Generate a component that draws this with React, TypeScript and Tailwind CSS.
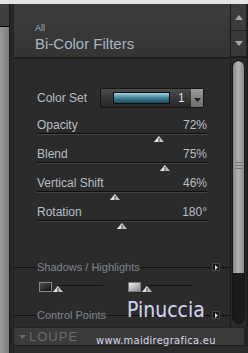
import type { CSSProperties } from 'react';

const sliders = [
  { label: 'Opacity', value: '72%', pos: 72 },
  { label: 'Blend', value: '75%', pos: 75 },
  { label: 'Vertical Shift', value: '46%', pos: 46 },
  { label: 'Rotation', value: '180°', pos: 50 },
];

function Thumb({ className = '', style }: { className?: string; style?: CSSProperties }) {
  return (
    <svg width="10" height="6" viewBox="0 0 10 6" className={className} style={style}>
      <polygon points="5,0 10,6 0,6" fill="#bdbdbd" />
      <polygon points="5,0 5,6 0,6" fill="#dedede" />
      <line x1="5" y1="2" x2="5" y2="6" stroke="#4a4a4a" strokeWidth="1" />
    </svg>
  );
}

function SectionHead({ title }: { title: string }) {
  return (
    <div className="flex items-center h-[12px]">
      <div className="w-[22px] h-px bg-[#111]" />
      <span className="text-[11px] leading-[12px] text-[#7f858b] px-px">{title}</span>
      <div className="flex-1 h-px bg-[#111]" />
      <div className="w-[8px] h-[8px] bg-[#161616] border border-[#484848] flex items-center justify-center">
        <svg width="3" height="5" viewBox="0 0 3 5">
          <polygon points="0,0 3,2.5 0,5" fill="#ddd" />
        </svg>
      </div>
      <div className="w-[10px] h-px bg-[#111]" />
    </div>
  );
}

function Swatch({ light }: { light?: boolean }) {
  return (
    <div className="flex items-start">
      <div
        className={
          light
            ? 'w-[13px] h-[10px] border border-[#777] bg-gradient-to-br from-[#f0f0f0] to-[#8a8a8a]'
            : 'w-[13px] h-[10px] border border-[#888] bg-gradient-to-br from-[#505050] to-[#111]'
        }
      />
      <div className="relative w-[51px] h-[10px]">
        <div className="absolute left-[5px] right-0 top-[3px] h-px bg-[#111]" />
        <Thumb className="absolute left-[1px] top-[4px]" />
      </div>
    </div>
  );
}

export default function App() {
  return (
    <div className="w-[248px] h-[353px] bg-[#dedede] flex flex-col overflow-hidden relative font-['Liberation_Sans',Arial,sans-serif]">
      <div className="h-[4px] bg-[#e4e4e4]" />
      <div className="flex-1 flex">
        {/* left edge */}
        <div className="w-[9px] flex flex-col">
          <div className="h-[23px] bg-[#3e3e3e] border-b border-black" />
          <div className="flex-1 bg-gradient-to-r from-[#9a9a9a] to-[#7c7c7c]" />
        </div>
        <div className="w-[5px] bg-[#262626] border-l border-[#1a1a1a]" />

        <div className="flex-1 flex flex-col">
          <div className="h-[323px] flex">
            {/* panel */}
            <div className="flex-1 flex flex-col bg-[#2b2b2b]">
              <div className="h-[55px] bg-gradient-to-b from-[#3c3c3c] to-[#343434] border-b-2 border-[#1e1e1e] pl-[21px] pt-[19px]">
                <div className="text-[9px] leading-[10px] text-[#a6b4c2]">All</div>
                <div className="text-[15px] leading-[17px] text-[#a7b5c3] mt-[2px]">Bi-Color Filters</div>
              </div>

              <div className="pl-[23px] pr-[9px] pt-[29px]">
                <div className="flex items-center h-[20px]">
                  <span className="w-[63px] text-[12px] text-[#b6bec6]">Color Set</span>
                  <div className="w-[104px] h-[20px] flex rounded-[2px] border border-[#151515] bg-gradient-to-b from-[#4c4c4c] to-[#262626]">
                    <div className="flex-1 flex items-center pl-[12px]">
                      <div className="w-[57px] h-[12px] border border-[#0c0c0c] bg-gradient-to-b from-[#a6d3e3] via-[#3d8098] to-[#1c4a5c]" />
                      <span className="ml-[8px] text-[12px] text-[#d8dde2]">1</span>
                    </div>
                    <div className="w-[12px] bg-gradient-to-b from-[#9a9a9a] to-[#6e6e6e] flex items-end justify-center pb-[5px]">
                      <svg width="7" height="4" viewBox="0 0 7 4">
                        <polygon points="0,0 7,0 3.5,4" fill="#222" />
                      </svg>
                    </div>
                  </div>
                </div>

                <div className="mt-[10px] w-[170px]">
                  {sliders.map((s) => (
                    <div key={s.label} className="h-[29px] relative">
                      <div className="flex justify-between text-[12px] leading-[14px] text-[#b6bec6]">
                        <span>{s.label}</span>
                        <span>{s.value}</span>
                      </div>
                      <div className="mt-[1px] h-[2px] border-t border-[#0e0e0e] border-b border-b-[#444]" />
                      <Thumb className="absolute top-[18px] -translate-x-1/2" style={{ left: `${s.pos}%` }} />
                    </div>
                  ))}
                </div>
              </div>

              <div className="mt-[27px]">
                <SectionHead title="Shadows / Highlights" />
                <div className="flex gap-[25px] pl-[25px] mt-[9px]">
                  <Swatch />
                  <Swatch light />
                </div>
                <div className="mt-[17px]">
                  <SectionHead title="Control Points" />
                </div>
              </div>
            </div>

            {/* scrollbar */}
            <div className="w-[16px] bg-[#2a2a2a] border-l border-[#1c1c1c] flex flex-col">
              <div className="h-[27px] bg-[#3c3c3c] border-b border-[#222] flex items-center justify-center">
                <svg width="8" height="5" viewBox="0 0 8 5">
                  <polygon points="4,0 8,5 0,5" fill="#a8a8a8" />
                </svg>
              </div>
              <div className="h-[27px] bg-[#393939] border-b-2 border-[#1e1e1e] flex items-center justify-center">
                <svg width="8" height="5" viewBox="0 0 8 5">
                  <polygon points="0,0 8,0 4,5" fill="#a8a8a8" />
                </svg>
              </div>
              <div className="flex-1 px-[1px] pt-[2px] pb-[3px]">
                <div className="h-full rounded-full bg-[#1b1b1b] border border-[#161616] flex flex-col overflow-hidden">
                  <div className="h-[212px] rounded-t-full bg-gradient-to-r from-[#8c8c8c] via-[#b2b2b2] to-[#8a8a8a] flex flex-col items-center justify-center pb-[4px]">
                    <div className="w-[8px] h-px bg-[#777] mb-[2px]" />
                    <div className="w-[8px] h-px bg-[#777] mb-[2px]" />
                    <div className="w-[8px] h-px bg-[#777]" />
                  </div>
                </div>
              </div>
            </div>
            <div className="w-[2px] bg-[#1e1e1e]" />
          </div>

          {/* loupe bar */}
          <div className="h-[18px] flex">
            <div className="flex-1 bg-[#3a3a3a] border-t border-[#242424] flex items-center pl-[5px] gap-[3px]">
              <svg width="7" height="4" viewBox="0 0 7 4">
                <polygon points="0,0 7,0 3.5,4" fill="#6a6a6a" />
              </svg>
              <span className="text-[13px] leading-[14px] tracking-[1px] text-[#6c6c6c]">LOUPE</span>
            </div>
            <div className="w-[4px] bg-[#242424]" />
          </div>
          <div className="flex-1 bg-[#2b2b2b] border-t border-[#1e1e1e]" />
        </div>
      </div>

      {/* watermark */}
      <div className="absolute left-[127px] top-[298px] text-[21px] leading-[24px] text-[#cfcff0] font-['DejaVu_Sans_Condensed','DejaVu_Sans',sans-serif] [text-shadow:0_0_1px_#555]">
        Pinuccia
      </div>
      <div className="absolute left-[96px] top-[335px] text-[11px] leading-[12px] tracking-[0.3px] text-[#d6d6e6] font-['DejaVu_Sans_Condensed','DejaVu_Sans',sans-serif]">
        www.maidiregrafica.eu
      </div>
    </div>
  );
}
